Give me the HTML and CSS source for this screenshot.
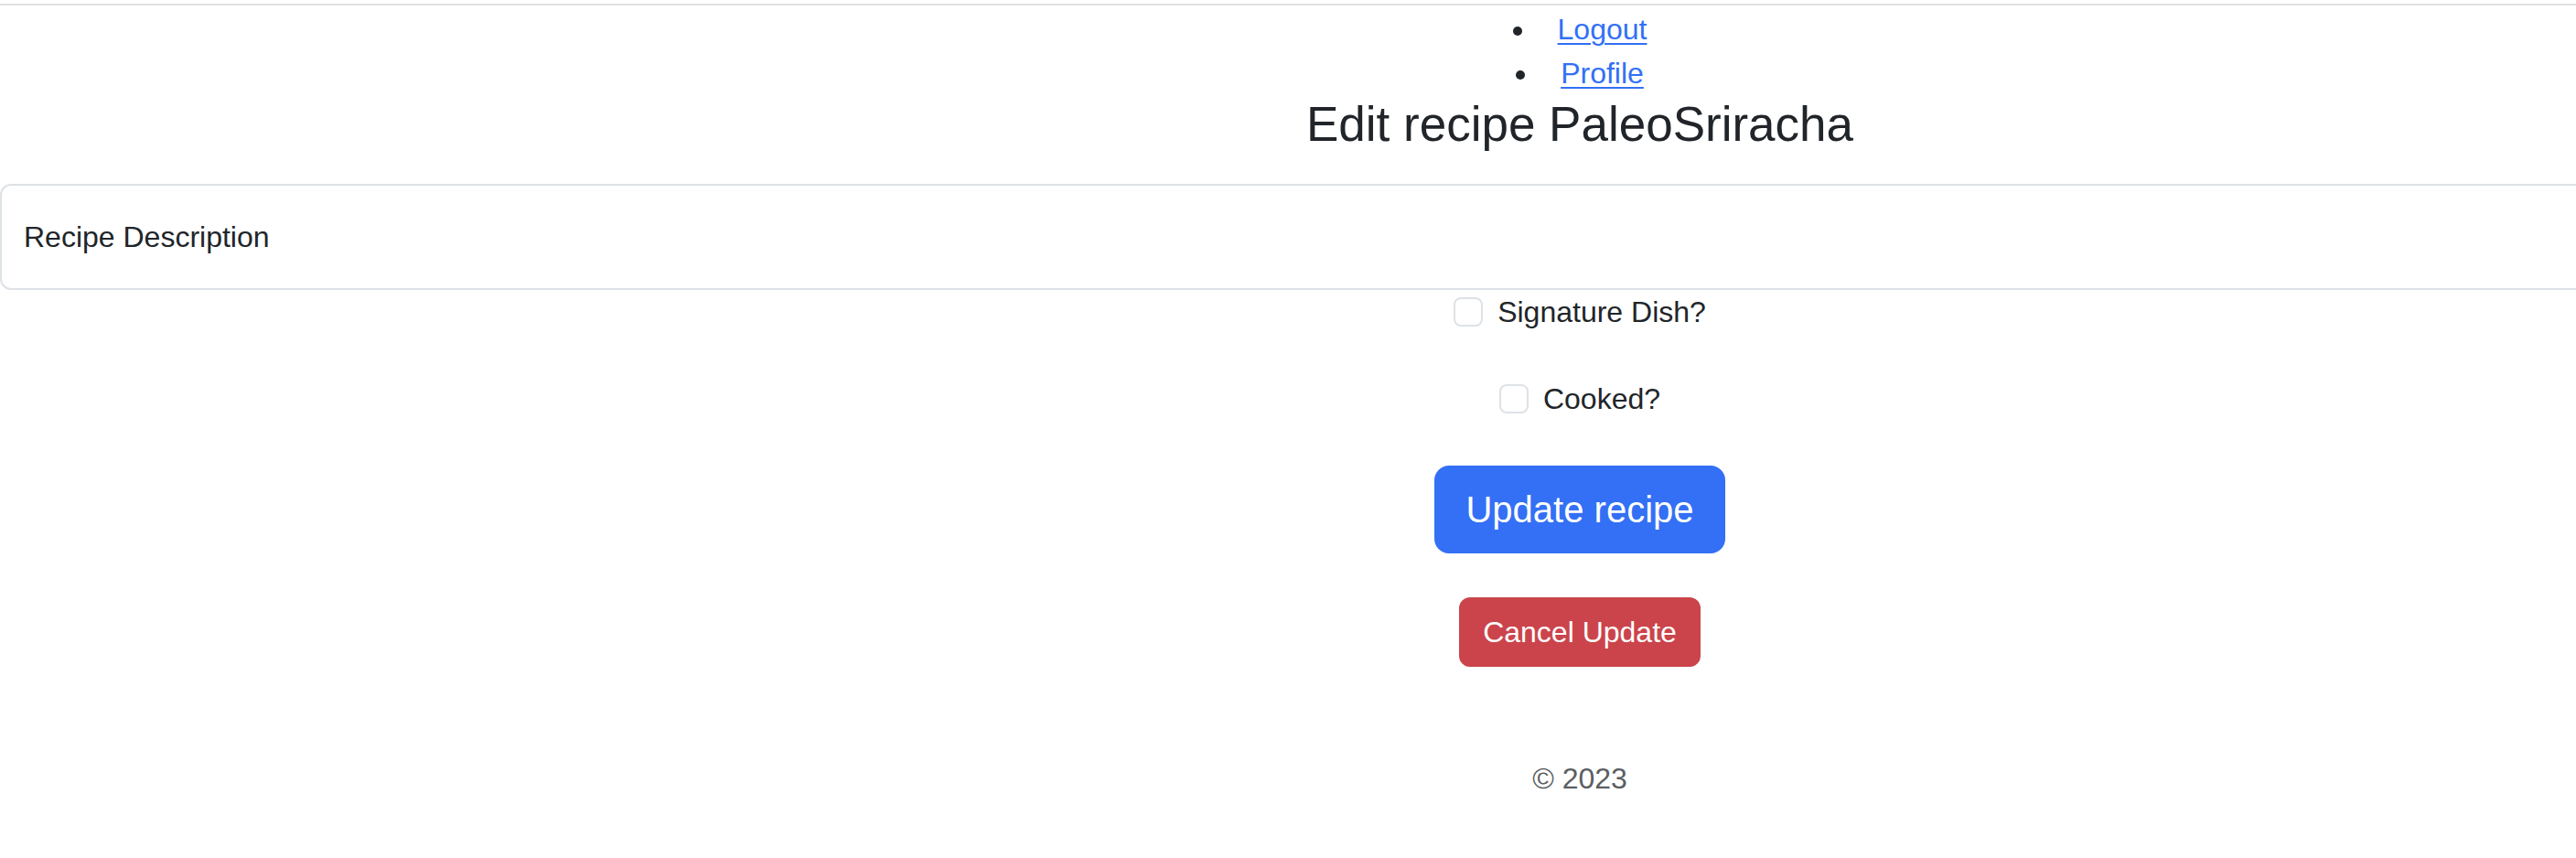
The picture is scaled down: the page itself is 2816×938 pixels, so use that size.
FILE: index.html
```html
<!DOCTYPE html>
<html lang="en">
<head>
<meta charset="utf-8">
<title>Edit recipe PaleoSriracha</title>
<link rel="stylesheet" href="styles.css">
</head>
<body>
<div class="page">
  <hr class="topline">
  <ul class="nav-list">
    <li><a href="#" class="nav-link">Logout</a></li>
    <li><a href="#" class="nav-link">Profile</a></li>
  </ul>
  <h1 class="title">Edit recipe PaleoSriracha</h1>
  <form class="recipe-form">
    <input class="control" type="text" placeholder="Recipe Description">
    <div class="check check-first">
      <input class="box" type="checkbox" id="sig">
      <label class="check-label" for="sig">Signature Dish?</label>
    </div>
    <div class="check check-second">
      <input class="box" type="checkbox" id="cooked">
      <label class="check-label" for="cooked">Cooked?</label>
    </div>
    <div class="actions">
      <button type="button" class="btn btn-primary">Update recipe</button>
    </div>
    <div class="actions actions-cancel">
      <button type="button" class="btn btn-danger">Cancel Update</button>
    </div>
  </form>
  <footer class="footer">© 2023</footer>
</div>
</body>
</html>
```
FILE: styles.css
```css
html, body {
  margin: 0;
  padding: 0;
  overflow: hidden;
  background: #ffffff;
}

body {
  font-family: "Liberation Sans", Arial, sans-serif;
  font-size: 32px;
  line-height: 48px;
  color: #212529;
}

.page {
  width: 3454px;
  text-align: center;
}

.topline {
  margin: 4px 0 0 0;
  height: 2px;
  border: 0;
  background: #e0e0e0;
}

.nav-list {
  margin: 2px 0 0 0;
  padding-left: 0;
  list-style-position: inside;
  line-height: 48px;
}

.nav-list li::marker {
  color: #212529;
}

.nav-link {
  color: #3370f5;
  text-decoration: underline;
  text-decoration-thickness: 2px;
  text-underline-offset: 4px;
  margin-left: 6px;
}

.title {
  margin: 0 0 33px 0;
  font-size: 53px;
  line-height: 64px;
  font-weight: 400;
  color: #212529;
}

.recipe-form {
  display: flex;
  flex-direction: column;
  align-items: center;
}

.control {
  box-sizing: border-box;
  display: block;
  width: 100%;
  height: 116px;
  margin: 0;
  padding: 0 24px;
  border: 2px solid #dee2e6;
  border-radius: 12px;
  font-family: "Liberation Sans", Arial, sans-serif;
  font-size: 32px;
  color: #212529;
  background: #ffffff;
  outline: none;
}

.control::placeholder {
  color: #212529;
  opacity: 1;
}

.check {
  display: flex;
  align-items: flex-start;
  justify-content: center;
  line-height: 48px;
}

.check-second {
  margin-top: 47px;
}

.box {
  appearance: none;
  -webkit-appearance: none;
  box-sizing: border-box;
  width: 32px;
  height: 32px;
  margin: 8px 16px 0 0;
  border: 2px solid #dee2e6;
  border-radius: 8px;
  background: #ffffff;
}

.check-label {
  color: #212529;
}

.actions {
  margin-top: 49px;
}

.actions-cancel {
  margin-top: 48px;
}

.btn {
  font-family: "Liberation Sans", Arial, sans-serif;
  color: #ffffff;
  border: 2px solid transparent;
  cursor: pointer;
}

.btn-primary {
  background: #3370f5;
  border-color: #3370f5;
  font-size: 40px;
  line-height: 60px;
  padding: 16px 32px;
  border-radius: 16px;
}

.btn-danger {
  background: #cb444b;
  border-color: #cb444b;
  font-size: 32px;
  line-height: 48px;
  padding: 12px 24px;
  border-radius: 12px;
}

.footer {
  margin-top: 98px;
  color: #5b5e62;
  line-height: 48px;
}
```
